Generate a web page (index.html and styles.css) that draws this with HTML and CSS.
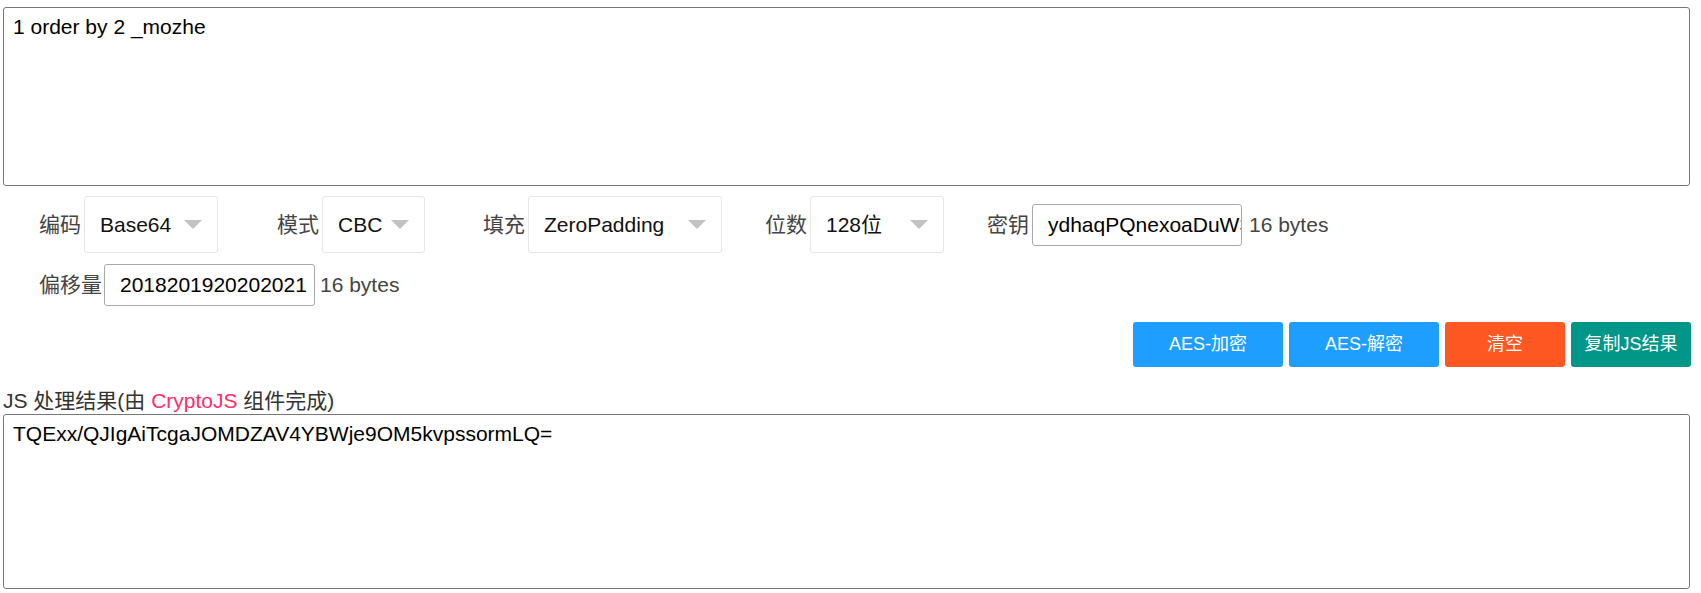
FILE: index.html
```html
<!DOCTYPE html>
<html lang="zh-CN">
<head>
<meta charset="utf-8">
<title>AES 加密解密</title>
<link rel="stylesheet" href="styles.css">
</head>
<body>
<div class="page">
  <textarea class="box box-src">1 order by 2 _mozhe</textarea>

  <div class="row row-opts">
    <div class="field">
      <label class="lbl">编码</label>
      <div class="sel sel-enc"><span class="val">Base64</span><i class="edge"></i></div>
    </div>
    <div class="field field-wide">
      <label class="lbl">模式</label>
      <div class="sel sel-mode"><span class="val">CBC</span><i class="edge"></i></div>
    </div>
    <div class="field field-wide2">
      <label class="lbl">填充</label>
      <div class="sel sel-pad"><span class="val">ZeroPadding</span><i class="edge"></i></div>
    </div>
    <div class="field field-narrow">
      <label class="lbl">位数</label>
      <div class="sel sel-bits"><span class="val">128位</span><i class="edge"></i></div>
    </div>
    <div class="field field-narrow">
      <label class="lbl lbl-key">密钥</label>
      <input class="inp inp-key" type="text" value="ydhaqPQnexoaDuW3">
      <span class="note">16 bytes</span>
    </div>
  </div>

  <div class="row row-iv">
    <div class="field">
      <label class="lbl lbl-iv">偏移量</label>
      <input class="inp inp-iv" type="text" value="2018201920202021">
      <span class="note note-iv">16 bytes</span>
    </div>
  </div>

  <div class="actions">
    <button class="btn btn-blue btn-lg">AES-加密</button>
    <button class="btn btn-blue btn-lg">AES-解密</button>
    <button class="btn btn-orange btn-md">清空</button>
    <button class="btn btn-teal btn-md">复制JS结果</button>
  </div>

  <div class="result-label">JS 处理结果(由 <span class="hl">CryptoJS</span> 组件完成)</div>
  <textarea class="box box-out">TQExx/QJIgAiTcgaJOMDZAV4YBWje9OM5kvpssormLQ=</textarea>
</div>
</body>
</html>
```

FILE: styles.css
```css
html, body {
  margin: 0;
  padding: 0;
  background: #fff;
}

body {
  font-family: "Liberation Sans", "Noto Sans CJK SC", sans-serif;
  font-size: 21px;
  color: #333;
}

.page {
  width: 1688px;
  padding: 7px 0 0 3px;
}

.box {
  display: block;
  box-sizing: border-box;
  width: 1687px;
  margin: 0;
  border: 1px solid #767676;
  border-radius: 3px;
  padding: 7px 8px 7px 9px;
  font-family: "Liberation Sans", "Noto Sans CJK SC", sans-serif;
  font-size: 21px;
  line-height: 24px;
  color: #000;
  background: #fff;
  resize: none;
  outline: none;
  overflow: hidden;
}

.box-src { height: 179px; }
.box-out { height: 175px; }

.row {
  display: flex;
  align-items: center;
  padding-left: 36px;
}

.row-opts {
  margin-top: 10px;
  height: 57px;
}

.row-iv {
  margin-top: 11px;
  height: 42px;
}

.field {
  display: flex;
  align-items: center;
}

.field-wide { margin-left: 59px; }
.field-wide2 { margin-left: 58px; }
.field-narrow { margin-left: 43px; }

.lbl {
  margin-right: 3px;
  line-height: 24px;
  color: #444;
  white-space: nowrap;
}

.lbl-iv { margin-right: 2px; }

.sel {
  position: relative;
  box-sizing: border-box;
  height: 57px;
  border: 1px solid #e6e6e6;
  border-radius: 3px;
  padding-left: 15px;
  display: flex;
  align-items: center;
  background: #fff;
  color: #111;
}

.sel .val {
  line-height: 24px;
  white-space: nowrap;
}

.sel-enc { width: 134px; }
.sel-mode { width: 103px; }
.sel-pad { width: 194px; }
.sel-bits { width: 134px; }

.edge {
  position: absolute;
  right: 15px;
  top: 50%;
  margin-top: -4.5px;
  width: 0;
  height: 0;
  border-style: solid;
  border-width: 9px 9px 0 9px;
  border-color: #c2c2c2 transparent transparent transparent;
}

.inp {
  box-sizing: border-box;
  height: 42px;
  margin: 0;
  border: 1px solid #a9a9a9;
  border-radius: 3px;
  padding: 0 0 0 15px;
  font-family: "Liberation Sans", "Noto Sans CJK SC", sans-serif;
  font-size: 21px;
  color: #000;
  background: #fff;
  outline: none;
}

.inp-key { width: 210px; }
.inp-iv { width: 211px; }

.note {
  margin-left: 7px;
  color: #444;
  line-height: 24px;
  white-space: nowrap;
}

.note-iv { margin-left: 5px; }

.actions {
  display: flex;
  justify-content: flex-end;
  gap: 6px;
  margin-top: 16px;
}

.btn {
  box-sizing: border-box;
  height: 45px;
  margin: 0;
  border: 0;
  border-radius: 3px;
  padding: 0;
  color: #fff;
  font-family: "Liberation Sans", "Noto Sans CJK SC", sans-serif;
  font-size: 18px;
  line-height: 45px;
  cursor: pointer;
}

.btn-lg { width: 150px; }
.btn-md { width: 120px; }

.btn-blue { background: #1e9fff; }
.btn-orange { background: #ff5722; }
.btn-teal { background: #009688; }

.result-label {
  margin-top: 21px;
  line-height: 26px;
  color: #333;
  white-space: nowrap;
}

.hl { color: #ff2d6b; }
```
